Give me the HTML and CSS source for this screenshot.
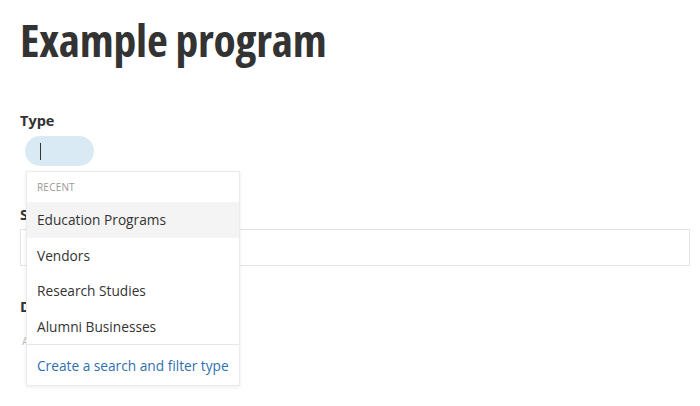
FILE: index.html
```html
<!DOCTYPE html>
<html lang="en">
<head>
<meta charset="utf-8">
<title>Example program</title>
<link rel="stylesheet" href="styles.css">
</head>
<body>
<main class="page">
  <h1 class="title">Example program</h1>

  <div class="field field-type">
    <div class="label">Type</div>
    <div class="pill"><span class="cursor"></span></div>
    <div class="dropdown">
      <div class="dd-header">RECENT</div>
      <ul class="dd-list">
        <li class="dd-item active">Education Programs</li>
        <li class="dd-item">Vendors</li>
        <li class="dd-item">Research Studies</li>
        <li class="dd-item">Alumni Businesses</li>
      </ul>
      <div class="dd-footer">Create a search and filter type</div>
    </div>
  </div>

  <div class="field field-summary">
    <div class="label">Summary</div>
    <div class="input"></div>
  </div>

  <div class="field field-desc">
    <div class="label">Description</div>
    <div class="hint">Add a description</div>
  </div>
</main>
</body>
</html>
```

FILE: styles.css
```css
* { box-sizing: border-box; }
html, body { margin: 0; padding: 0; background: #fff; min-height: 100vh; }
body {
  font-family: "Open Sans", "Noto Sans", "Liberation Sans", sans-serif;
  color: #333;
}
.page {
  padding: 11px 10px 0 20px;
  min-height: 406px;
}
.title {
  margin: 0;
  font-family: "Open Sans", "DejaVu Sans Condensed", sans-serif;
  font-stretch: 75%;
  font-weight: 700;
  font-size: 45.5px;
  line-height: 56px;
  color: #333;
  letter-spacing: -0.2px;
}
.field { position: relative; }
.label {
  font-size: 14.5px;
  font-weight: 700;
  line-height: 20px;
  color: #333;
}
.field-type { margin-top: 44px; }
.pill {
  margin: 5px 0 0 5px;
  width: 69px;
  height: 30px;
  border-radius: 15px;
  background: #d9eaf4;
  display: flex;
  align-items: center;
  padding-left: 15px;
}
.cursor {
  display: block;
  width: 1px;
  height: 17px;
  background: #333;
}
.dropdown {
  position: absolute;
  left: 6px;
  top: 60px;
  width: 214px;
  height: 215px;
  background: #fff;
  border: 1px solid #ebebeb;
  box-shadow: 0 1px 4px rgba(0,0,0,0.08);
  z-index: 5;
}
.dd-header {
  height: 30px;
  padding-left: 10px;
  display: flex;
  align-items: center;
  font-size: 10px;
  color: #999;
  letter-spacing: 0.2px;
}
.dd-list { list-style: none; margin: 0; padding: 0; }
.dd-item {
  height: 35.5px;
  padding-left: 10px;
  display: flex;
  align-items: center;
  font-size: 13.7px;
  color: #333;
}
.dd-item.active { background: #f4f4f4; }
.dd-footer {
  border-top: 1px solid #e6e6e6;
  height: 41px;
  padding-left: 10px;
  display: flex;
  align-items: center;
  font-size: 13.7px;
  color: #2f6fb0;
}
.field-summary { margin-top: 39px; }
.input {
  margin-top: 4px;
  height: 37px;
  border: 1px solid #e3e3e3;
  background: #fff;
}
.field-desc { margin-top: 31px; }
.hint {
  margin-top: 16px;
  font-size: 11px;
  color: #bbb;
  padding-left: 2px;
}
```
